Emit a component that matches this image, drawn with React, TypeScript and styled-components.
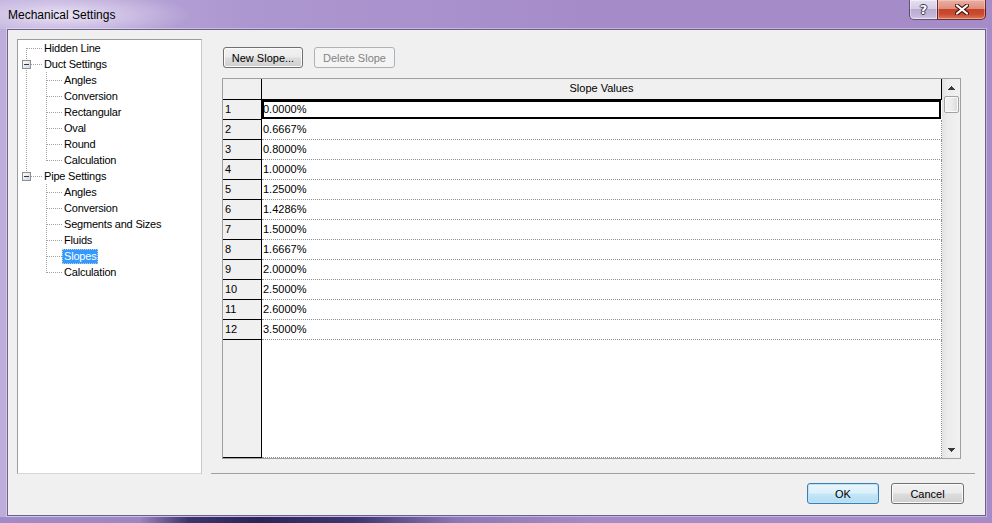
import React from 'react';
import styled, { createGlobalStyle, css } from 'styled-components';

const GlobalStyle = createGlobalStyle`
  html, body { margin: 0; padding: 0; background: #fff; }
  body { font-family: "Liberation Sans", Arial, sans-serif; font-size: 11px; color: #000; }
  * { box-sizing: border-box; }
`;

const Window = styled.div`
  width: 992px;
  height: 523px;
  display: flex;
  flex-direction: column;
  overflow: hidden;
  background: linear-gradient(90deg, #bcaddb 0%, #ad97d0 25%, #a58cc9 60%, #a58bc8 100%);
`;

const TitleBar = styled.div`
  height: 29px;
  flex: none;
  display: flex;
  align-items: flex-start;
  justify-content: space-between;
  background: radial-gradient(ellipse 130px 24px at 62px 15px, rgba(240, 234, 248, 0.9) 0%, rgba(226, 216, 240, 0.6) 45%, rgba(200, 185, 225, 0) 100%);
`;

const Title = styled.div`
  padding: 7px 0 0 8px;
  font-size: 12px;
  line-height: 16px;
  color: #000;
`;

const Controls = styled.div`
  display: flex;
  margin-right: 6px;
`;

const CaptionButton = styled.div<{ $kind: 'help' | 'close' }>`
  height: 20px;
  display: flex;
  align-items: center;
  justify-content: center;
  border: 1px solid rgba(55, 40, 75, 0.75);
  border-top: none;
  ${(p) =>
    p.$kind === 'help'
      ? css`
          width: 28px;
          border-right: none;
          border-radius: 0 0 0 5px;
          background: linear-gradient(#e6dff0 0%, #d6cce5 45%, #b9aad0 50%, #c5b7da 85%, #d8cde8 100%);
          box-shadow: inset 0 0 0 1px rgba(255, 255, 255, 0.45);
        `
      : css`
          width: 49px;
          border-radius: 0 0 5px 0;
          border-color: rgba(70, 20, 20, 0.8);
          background: linear-gradient(#eab0a3 0%, #df8f7e 45%, #c8432a 50%, #c84b31 75%, #e0795c 100%);
          box-shadow: inset 0 0 0 1px rgba(255, 220, 210, 0.45);
        `}
`;

const HelpGlyph = styled.span`
  font-family: "DejaVu Sans", "Liberation Sans", sans-serif;
  font-weight: bold;
  font-size: 13px;
  line-height: 13px;
  color: #fff;
  text-shadow: 1px 0 0 #3d3550, -1px 0 0 #3d3550, 0 1px 0 #3d3550, 0 -1px 0 #3d3550;
`;

const Client = styled.div`
  flex: none;
  margin: 0 6px 0 7px;
  height: 487px;
  background: #f0f0f0;
  border: 1px solid #6c5f88;
  box-shadow: 0 0 0 1px rgba(255, 255, 255, 0.35);
  display: flex;
  flex-direction: column;
  padding: 9px 10px 0 9px;
`;

const BottomEdge = styled.div`
  flex: 1;
  margin-top: 1px;
  background: linear-gradient(90deg, #a08ac7 0%, #9c86c4 14%, #3b356d 19%, #2a2558 26%, #3d3872 36%, #8a78b6 46%, #a48bc8 60%, #a58bc8 100%);
`;

const MainRow = styled.div`
  display: flex;
  gap: 9px;
  height: 435px;
  flex: none;
`;

const TreeBox = styled.div`
  width: 185px;
  flex: none;
  background: #fff;
  border: 1px solid;
  border-color: #9c9c9c #c9c9c9 #d6d6d6 #9c9c9c;
  overflow: hidden;
`;

const TreeRowEl = styled.div`
  height: 16px;
  display: flex;
  align-items: center;
`;

const Label = styled.span<{ $selected?: boolean }>`
  height: 15px;
  line-height: 15px;
  padding: 0 2px;
  letter-spacing: -0.2px;
  white-space: nowrap;
  color: #000;
  ${(p) =>
    p.$selected &&
    css`
      background: #3399ff;
      color: #fff;
      outline: 1px dotted rgba(255, 230, 170, 0.7);
      outline-offset: -1px;
    `}
`;

const Panel = styled.div`
  flex: 1;
  display: flex;
  flex-direction: column;
  padding: 8px 14px 14px 11px;
  border-bottom: 1px solid #a0a0a0;
`;

const ButtonRow = styled.div`
  display: flex;
  gap: 11px;
  margin-left: 1px;
  margin-bottom: 10px;
`;

const Button = styled.button<{ $variant?: 'default' | 'disabled'; $width: number }>`
  width: ${(p) => p.$width}px;
  height: 21px;
  padding: 0;
  font-family: "Liberation Sans", Arial, sans-serif;
  font-size: 11px;
  color: #000;
  border: 1px solid #707070;
  border-radius: 3px;
  background: linear-gradient(#f2f2f2 0%, #ebebeb 48%, #dddddd 52%, #cfcfcf 100%);
  box-shadow: inset 0 0 0 1px #fbfbfb;
  ${(p) =>
    p.$variant === 'disabled' &&
    css`
      color: #838383;
      border-color: #adb2b5;
      background: #f4f4f4;
      box-shadow: none;
    `}
  ${(p) =>
    p.$variant === 'default' &&
    css`
      border-color: #3c7fb1;
      background: linear-gradient(#e9f5fc 0%, #dcf0fb 48%, #c4e6f8 52%, #b3dcf3 100%);
      box-shadow: inset 0 0 0 1px #bfe3f8;
    `}
`;

const GridFrame = styled.div`
  flex: 1;
  display: flex;
  border: 1px solid #a0a0a0;
  box-shadow: inset 1px 0 0 #8a8a8a;
  background: #fff;
`;

const RowHeaderCol = styled.div`
  width: 39px;
  flex: none;
  display: flex;
  flex-direction: column;
  background: #f0f0f0;
  border-right: 1px solid #000;
  border-bottom: 1px solid #000;
`;

const CornerCell = styled.div`
  height: 21px;
  flex: none;
  border-bottom: 1px solid #000;
`;

const RowNum = styled.div`
  height: 20px;
  flex: none;
  line-height: 18px;
  padding-left: 2px;
  border-bottom: 1px solid #000;
`;

const DataCol = styled.div`
  flex: 1;
  display: flex;
  flex-direction: column;
`;

const HeaderCell = styled.div`
  height: 21px;
  flex: none;
  line-height: 19px;
  text-align: center;
  background: #f0f0f0;
  border-bottom: 1px solid #000;
  border-right: 1px solid #000;
`;

const DataCell = styled.div<{ $selected?: boolean }>`
  height: 20px;
  flex: none;
  line-height: 18px;
  padding-left: 1px;
  border-bottom: 1px dotted #909090;
  border-right: 1px dotted #909090;
  ${(p) =>
    p.$selected &&
    css`
      border-bottom-color: transparent;
      border-right-color: transparent;
      box-shadow: inset 0 0 0 2px #000;
    `}
`;

const Filler = styled.div`
  flex: 1;
  border-right: 1px dotted #909090;
  border-bottom: 1px dotted #909090;
`;

const ScrollBar = styled.div`
  width: 18px;
  flex: none;
  display: flex;
  flex-direction: column;
  background: linear-gradient(90deg, #e2e2e2 0%, #ececec 30%, #f1f1f1 100%);
`;

const ArrowButton = styled.div`
  height: 17px;
  flex: none;
  display: flex;
  align-items: center;
  justify-content: center;
`;

const Thumb = styled.div`
  height: 17px;
  margin: 0 0 0 2px;
  width: 15px;
  flex: none;
  border: 1px solid #a3a3a3;
  border-radius: 2px;
  background: linear-gradient(90deg, #f3f3f3 0%, #ececec 50%, #dadada 100%);
  box-shadow: inset 0 0 0 1px #fafafa;
`;

const Track = styled.div`
  flex: 1;
`;

const Footer = styled.div`
  display: flex;
  justify-content: flex-end;
  gap: 12px;
  margin-top: 9px;
  padding-right: 11px;
`;

type Node = {
  label: string;
  level: number;
  kind: 'first' | 'mid' | 'last';
  expander?: boolean;
  ancestors?: boolean[];
  selected?: boolean;
};

const ductKids = ['Angles', 'Conversion', 'Rectangular', 'Oval', 'Round', 'Calculation'];
const pipeKids = ['Angles', 'Conversion', 'Segments and Sizes', 'Fluids', 'Slopes', 'Calculation'];

const nodes: Node[] = [
  { label: 'Hidden Line', level: 0, kind: 'first' },
  { label: 'Duct Settings', level: 0, kind: 'mid', expander: true },
  ...ductKids.map((l, i, a) => ({
    label: l,
    level: 1,
    kind: (i === a.length - 1 ? 'last' : 'mid') as Node['kind'],
    ancestors: [true],
  })),
  { label: 'Pipe Settings', level: 0, kind: 'last', expander: true },
  ...pipeKids.map((l, i, a) => ({
    label: l,
    level: 1,
    kind: (i === a.length - 1 ? 'last' : 'mid') as Node['kind'],
    ancestors: [false],
    selected: l === 'Slopes',
  })),
];

const DOT = '#a0a0a0';

const Gutter: React.FC<{ node: Node }> = ({ node }) => {
  const L = node.level;
  const w = 20 * L + 24;
  const x = 20 * L + 8.5;
  const y1 = node.kind === 'first' ? 8 : 0;
  const y2 = node.kind === 'last' ? 9 : 16;
  return (
    <svg width={w} height={16} style={{ flex: 'none', display: 'block' }} shapeRendering="crispEdges">
      {(node.ancestors || []).map((cont, a) =>
        cont ? (
          <line key={a} x1={20 * a + 8.5} y1={0} x2={20 * a + 8.5} y2={16} stroke={DOT} strokeDasharray="1 1" />
        ) : null
      )}
      <line x1={x} y1={y1} x2={x} y2={y2} stroke={DOT} strokeDasharray="1 1" />
      <line x1={20 * L + 9} y1={8.5} x2={20 * L + 24} y2={8.5} stroke={DOT} strokeDasharray="1 1" />
      {node.expander && (
        <g>
          <defs>
            <linearGradient id="exg" x1="0" y1="0" x2="1" y2="1">
              <stop offset="0" stopColor="#ffffff" />
              <stop offset="1" stopColor="#d4d4d4" />
            </linearGradient>
          </defs>
          <rect x={20 * L + 4.5} y={4.5} width={8} height={8} fill="url(#exg)" stroke="#8f8f8f" />
          <line x1={20 * L + 6} y1={8.5} x2={20 * L + 11} y2={8.5} stroke="#1c3a6a" />
        </g>
      )}
    </svg>
  );
};

const values = [
  '0.0000%', '0.6667%', '0.8000%', '1.0000%', '1.2500%', '1.4286%',
  '1.5000%', '1.6667%', '2.0000%', '2.5000%', '2.6000%', '3.5000%',
];

const UpArrow = () => (
  <svg width="7" height="4" viewBox="0 0 7 4" shapeRendering="crispEdges">
    <path d="M3.5 0 L7 4 L0 4 Z" fill="#3a3a3a" />
  </svg>
);
const DownArrow = () => (
  <svg width="7" height="4" viewBox="0 0 7 4" shapeRendering="crispEdges">
    <path d="M0 0 L7 0 L3.5 4 Z" fill="#3a3a3a" />
  </svg>
);

const CloseGlyph = () => (
  <svg width="14" height="11" viewBox="0 0 14 11">
    <path d="M2 1.5 L12 9.5 M12 1.5 L2 9.5" stroke="#4a1410" strokeWidth="4.2" strokeLinecap="round" />
    <path d="M2 1.5 L12 9.5 M12 1.5 L2 9.5" stroke="#ffffff" strokeWidth="2.2" strokeLinecap="round" />
  </svg>
);

export default function App() {
  return (
    <>
      <GlobalStyle />
      <Window>
        <TitleBar>
          <Title>Mechanical Settings</Title>
          <Controls>
            <CaptionButton $kind="help">
              <HelpGlyph>?</HelpGlyph>
            </CaptionButton>
            <CaptionButton $kind="close">
              <CloseGlyph />
            </CaptionButton>
          </Controls>
        </TitleBar>
        <Client>
          <MainRow>
            <TreeBox>
              {nodes.map((n, i) => (
                <TreeRowEl key={i}>
                  <Gutter node={n} />
                  <Label $selected={n.selected}>{n.label}</Label>
                </TreeRowEl>
              ))}
            </TreeBox>
            <Panel>
              <ButtonRow>
                <Button $width={80}>New Slope...</Button>
                <Button $width={81} $variant="disabled">Delete Slope</Button>
              </ButtonRow>
              <GridFrame>
                <RowHeaderCol>
                  <CornerCell />
                  {values.map((_, i) => (
                    <RowNum key={i}>{i + 1}</RowNum>
                  ))}
                </RowHeaderCol>
                <DataCol>
                  <HeaderCell>Slope Values</HeaderCell>
                  {values.map((v, i) => (
                    <DataCell key={i} $selected={i === 0}>{v}</DataCell>
                  ))}
                  <Filler />
                </DataCol>
                <ScrollBar>
                  <ArrowButton><UpArrow /></ArrowButton>
                  <Thumb />
                  <Track />
                  <ArrowButton><DownArrow /></ArrowButton>
                </ScrollBar>
              </GridFrame>
            </Panel>
          </MainRow>
          <Footer>
            <Button $width={72} $variant="default">OK</Button>
            <Button $width={73}>Cancel</Button>
          </Footer>
        </Client>
        <BottomEdge />
      </Window>
    </>
  );
}
